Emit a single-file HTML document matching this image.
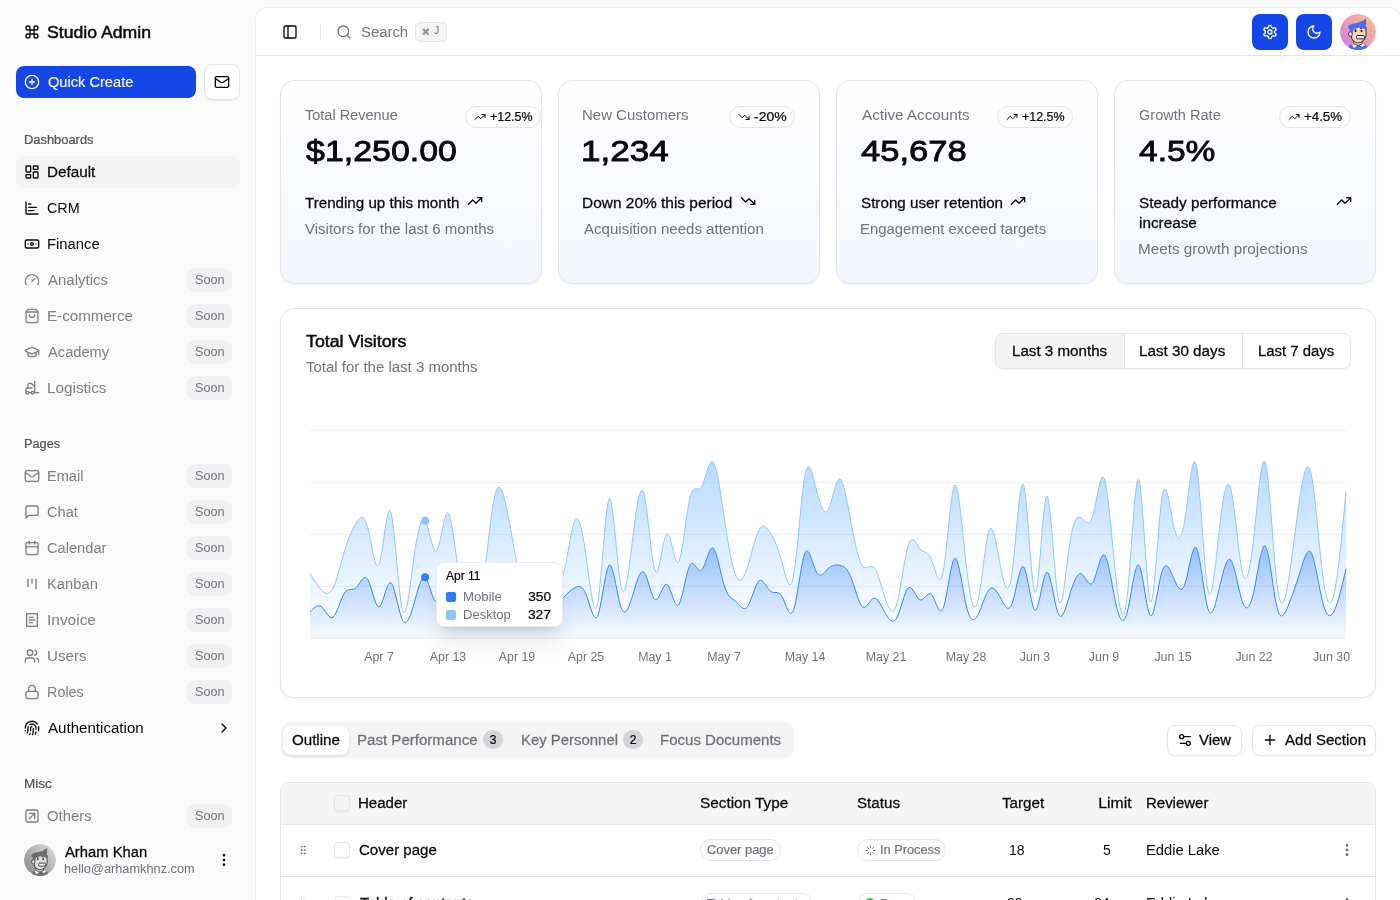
<!DOCTYPE html><html><head><meta charset="utf-8"><style>
*{box-sizing:border-box;margin:0;padding:0}
html,body{width:1400px;height:900px;overflow:hidden}
body{background:#fafafa;font-family:"Liberation Sans",sans-serif;color:#09090b;position:relative}
.a{position:absolute}
.t{position:absolute;line-height:1;white-space:nowrap;will-change:transform}
.ic{position:absolute;overflow:visible}
</style></head><body>
<svg class="ic" style="left:24px;top:24px;" width="16" height="16" viewBox="0 0 24 24" fill="none" stroke="#09090b" stroke-width="2" stroke-linecap="round" stroke-linejoin="round"><path d="M15 6v12a3 3 0 1 0 3-3H6a3 3 0 1 0 3 3V6a3 3 0 1 0-3 3h12a3 3 0 1 0-3-3"/></svg>
<div class="t" style="left:47.41px;top:24.76px;font-size:16px;font-weight:400;color:#09090b;-webkit-text-stroke:0.448px #09090b;transform:scaleX(1.1029);transform-origin:left;">Studio Admin</div>
<div class="a" style="left:16px;top:66px;width:180px;height:32px;background:#1447e6;border-radius:8px;"></div>
<svg class="ic" style="left:24px;top:74px;" width="16" height="16" viewBox="0 0 24 24" fill="none" stroke="#ffffff" stroke-width="2" stroke-linecap="round" stroke-linejoin="round"><circle cx="12" cy="12" r="10"/><path d="M8 12h8"/><path d="M12 8v8"/></svg>
<div class="t" style="left:47.74px;top:75.35px;font-size:14px;font-weight:400;color:#ffffff;-webkit-text-stroke:0.252px #ffffff;transform:scaleX(1.0444);transform-origin:left;-webkit-text-stroke:0.12px #fff;">Quick Create</div>
<div class="a" style="left:204px;top:64px;width:36px;height:36px;background:#fff;border:1px solid #e4e4e7;border-radius:8px;box-shadow:0 1px 2px rgba(0,0,0,.05);"></div>
<svg class="ic" style="left:214px;top:74px;" width="16" height="16" viewBox="0 0 24 24" fill="none" stroke="#09090b" stroke-width="2" stroke-linecap="round" stroke-linejoin="round"><rect width="20" height="16" x="2" y="4" rx="2"/><path d="m22 7-8.97 5.7a1.94 1.94 0 0 1-2.06 0L2 7"/></svg>
<div class="t" style="left:23.57px;top:133.74px;font-size:12px;font-weight:400;color:#525256;-webkit-text-stroke:0.216px #525256;transform:scaleX(1.0742);transform-origin:left;">Dashboards</div>
<div class="a" style="left:16px;top:156px;width:224px;height:32px;background:#f4f4f5;border-radius:8px;"></div>
<svg class="ic" style="left:24px;top:164px;" width="16" height="16" viewBox="0 0 24 24" fill="none" stroke="#09090b" stroke-width="2" stroke-linecap="round" stroke-linejoin="round"><rect width="7" height="9" x="3" y="3" rx="1"/><rect width="7" height="5" x="14" y="3" rx="1"/><rect width="7" height="9" x="14" y="12" rx="1"/><rect width="7" height="5" x="3" y="16" rx="1"/></svg>
<div class="t" style="left:46.68px;top:165.15px;font-size:14px;font-weight:400;color:#09090b;-webkit-text-stroke:0.252px #09090b;transform:scaleX(1.0900);transform-origin:left;">Default</div>
<svg class="ic" style="left:24px;top:200px;" width="16" height="16" viewBox="0 0 24 24" fill="none" stroke="#09090b" stroke-width="2" stroke-linecap="round" stroke-linejoin="round"><path d="M3 3v16a2 2 0 0 0 2 2h16"/><path d="M7 16h8"/><path d="M7 11h12"/><path d="M7 6h3"/></svg>
<div class="t" style="left:47.18px;top:201.15px;font-size:14px;font-weight:400;color:#09090b;transform:scaleX(1.0256);transform-origin:left;">CRM</div>
<svg class="ic" style="left:24px;top:236px;" width="16" height="16" viewBox="0 0 24 24" fill="none" stroke="#09090b" stroke-width="2" stroke-linecap="round" stroke-linejoin="round"><rect width="20" height="12" x="2" y="6" rx="2"/><circle cx="12" cy="12" r="2"/><path d="M6 12h.01M18 12h.01"/></svg>
<div class="t" style="left:46.71px;top:237.15px;font-size:14px;font-weight:400;color:#09090b;transform:scaleX(1.0600);transform-origin:left;">Finance</div>
<svg class="ic" style="left:24px;top:272px;" width="16" height="16" viewBox="0 0 24 24" fill="none" stroke="#7e7e80" stroke-width="2" stroke-linecap="round" stroke-linejoin="round"><path d="m12 14 4-4"/><path d="M3.34 19a10 10 0 1 1 17.32 0"/></svg>
<div class="t" style="left:47.90px;top:273.15px;font-size:14px;font-weight:400;color:#7e7e80;transform:scaleX(1.0701);transform-origin:left;">Analytics</div>
<div class="a" style="left:187.4px;top:268.25px;width:44.6px;height:23.5px;background:#f0f0f2;border-radius:8px;"></div>
<div class="t" style="left:194.63px;top:274.04px;font-size:12px;font-weight:400;color:#76767a;transform:scaleX(1.0562);transform-origin:left;">Soon</div>
<svg class="ic" style="left:24px;top:308px;" width="16" height="16" viewBox="0 0 24 24" fill="none" stroke="#7e7e80" stroke-width="2" stroke-linecap="round" stroke-linejoin="round"><path d="M16 10a4 4 0 0 1-8 0"/><path d="M3.103 6.034h17.794"/><path d="M3.4 5.467a2 2 0 0 0-.4 1.2V20a2 2 0 0 0 2 2h14a2 2 0 0 0 2-2V6.667a2 2 0 0 0-.4-1.2l-2-2.667A2 2 0 0 0 17 2H7a2 2 0 0 0-1.6.8z"/></svg>
<div class="t" style="left:46.69px;top:309.15px;font-size:14px;font-weight:400;color:#7e7e80;transform:scaleX(1.0830);transform-origin:left;">E-commerce</div>
<div class="a" style="left:187.4px;top:304.25px;width:44.6px;height:23.5px;background:#f0f0f2;border-radius:8px;"></div>
<div class="t" style="left:194.63px;top:310.04px;font-size:12px;font-weight:400;color:#76767a;transform:scaleX(1.0562);transform-origin:left;">Soon</div>
<svg class="ic" style="left:24px;top:344px;" width="16" height="16" viewBox="0 0 24 24" fill="none" stroke="#7e7e80" stroke-width="2" stroke-linecap="round" stroke-linejoin="round"><path d="M21.42 10.922a1 1 0 0 0-.019-1.838L12.83 5.18a2 2 0 0 0-1.66 0L2.6 9.08a1 1 0 0 0 0 1.832l8.57 3.908a2 2 0 0 0 1.66 0z"/><path d="M22 10v6"/><path d="M6 12.5V16a6 3 0 0 0 12 0v-3.5"/></svg>
<div class="t" style="left:47.90px;top:345.15px;font-size:14px;font-weight:400;color:#7e7e80;transform:scaleX(1.0483);transform-origin:left;">Academy</div>
<div class="a" style="left:187.4px;top:340.25px;width:44.6px;height:23.5px;background:#f0f0f2;border-radius:8px;"></div>
<div class="t" style="left:194.63px;top:346.04px;font-size:12px;font-weight:400;color:#76767a;transform:scaleX(1.0562);transform-origin:left;">Soon</div>
<svg class="ic" style="left:24px;top:380px;" width="16" height="16" viewBox="0 0 24 24" fill="none" stroke="#7e7e80" stroke-width="2" stroke-linecap="round" stroke-linejoin="round"><path d="M12 12H5a2 2 0 0 0-2 2v5"/><circle cx="13" cy="19" r="2"/><circle cx="5" cy="19" r="2"/><path d="M8 19h3m5-17v17h6M6 12V7c0-1.1.9-2 2-2h3l5 5"/></svg>
<div class="t" style="left:46.68px;top:381.15px;font-size:14px;font-weight:400;color:#7e7e80;transform:scaleX(1.0918);transform-origin:left;">Logistics</div>
<div class="a" style="left:187.4px;top:376.25px;width:44.6px;height:23.5px;background:#f0f0f2;border-radius:8px;"></div>
<div class="t" style="left:194.63px;top:382.04px;font-size:12px;font-weight:400;color:#76767a;transform:scaleX(1.0562);transform-origin:left;">Soon</div>
<div class="t" style="left:23.58px;top:437.74px;font-size:12px;font-weight:400;color:#525256;-webkit-text-stroke:0.216px #525256;transform:scaleX(1.0600);transform-origin:left;">Pages</div>
<svg class="ic" style="left:24px;top:468px;" width="16" height="16" viewBox="0 0 24 24" fill="none" stroke="#7e7e80" stroke-width="2" stroke-linecap="round" stroke-linejoin="round"><rect width="20" height="16" x="2" y="4" rx="2"/><path d="m22 7-8.97 5.7a1.94 1.94 0 0 1-2.06 0L2 7"/></svg>
<div class="t" style="left:46.73px;top:469.15px;font-size:14px;font-weight:400;color:#7e7e80;transform:scaleX(1.0403);transform-origin:left;">Email</div>
<div class="a" style="left:187.4px;top:464.25px;width:44.6px;height:23.5px;background:#f0f0f2;border-radius:8px;"></div>
<div class="t" style="left:194.63px;top:470.04px;font-size:12px;font-weight:400;color:#76767a;transform:scaleX(1.0562);transform-origin:left;">Soon</div>
<svg class="ic" style="left:24px;top:504px;" width="16" height="16" viewBox="0 0 24 24" fill="none" stroke="#7e7e80" stroke-width="2" stroke-linecap="round" stroke-linejoin="round"><path d="M21 15a2 2 0 0 1-2 2H7l-4 4V5a2 2 0 0 1 2-2h14a2 2 0 0 1 2 2z"/></svg>
<div class="t" style="left:47.17px;top:505.15px;font-size:14px;font-weight:400;color:#7e7e80;transform:scaleX(1.0428);transform-origin:left;">Chat</div>
<div class="a" style="left:187.4px;top:500.25px;width:44.6px;height:23.5px;background:#f0f0f2;border-radius:8px;"></div>
<div class="t" style="left:194.63px;top:506.04px;font-size:12px;font-weight:400;color:#76767a;transform:scaleX(1.0562);transform-origin:left;">Soon</div>
<svg class="ic" style="left:24px;top:540px;" width="16" height="16" viewBox="0 0 24 24" fill="none" stroke="#7e7e80" stroke-width="2" stroke-linecap="round" stroke-linejoin="round"><path d="M8 2v4"/><path d="M16 2v4"/><rect width="18" height="18" x="3" y="4" rx="2"/><path d="M3 10h18"/></svg>
<div class="t" style="left:47.17px;top:541.15px;font-size:14px;font-weight:400;color:#7e7e80;transform:scaleX(1.0455);transform-origin:left;">Calendar</div>
<div class="a" style="left:187.4px;top:536.25px;width:44.6px;height:23.5px;background:#f0f0f2;border-radius:8px;"></div>
<div class="t" style="left:194.63px;top:542.04px;font-size:12px;font-weight:400;color:#76767a;transform:scaleX(1.0562);transform-origin:left;">Soon</div>
<svg class="ic" style="left:24px;top:576px;" width="16" height="16" viewBox="0 0 24 24" fill="none" stroke="#7e7e80" stroke-width="2" stroke-linecap="round" stroke-linejoin="round"><path d="M6 5v11"/><path d="M12 5v6"/><path d="M18 5v14"/></svg>
<div class="t" style="left:46.72px;top:577.15px;font-size:14px;font-weight:400;color:#7e7e80;transform:scaleX(1.0541);transform-origin:left;">Kanban</div>
<div class="a" style="left:187.4px;top:572.25px;width:44.6px;height:23.5px;background:#f0f0f2;border-radius:8px;"></div>
<div class="t" style="left:194.63px;top:578.04px;font-size:12px;font-weight:400;color:#76767a;transform:scaleX(1.0562);transform-origin:left;">Soon</div>
<svg class="ic" style="left:24px;top:612px;" width="16" height="16" viewBox="0 0 24 24" fill="none" stroke="#7e7e80" stroke-width="2" stroke-linecap="round" stroke-linejoin="round"><path d="M4 2v20l2-1 2 1 2-1 2 1 2-1 2 1 2-1 2 1V2l-2 1-2-1-2 1-2-1-2 1-2-1-2 1Z"/><path d="M14 8H8"/><path d="M16 12H8"/><path d="M13 16H8"/></svg>
<div class="t" style="left:46.51px;top:613.15px;font-size:14px;font-weight:400;color:#7e7e80;transform:scaleX(1.1033);transform-origin:left;">Invoice</div>
<div class="a" style="left:187.4px;top:608.25px;width:44.6px;height:23.5px;background:#f0f0f2;border-radius:8px;"></div>
<div class="t" style="left:194.63px;top:614.04px;font-size:12px;font-weight:400;color:#76767a;transform:scaleX(1.0562);transform-origin:left;">Soon</div>
<svg class="ic" style="left:24px;top:648px;" width="16" height="16" viewBox="0 0 24 24" fill="none" stroke="#7e7e80" stroke-width="2" stroke-linecap="round" stroke-linejoin="round"><path d="M16 21v-2a4 4 0 0 0-4-4H6a4 4 0 0 0-4 4v2"/><circle cx="9" cy="7" r="4"/><path d="M22 21v-2a4 4 0 0 0-3-3.87"/><path d="M16 3.13a4 4 0 0 1 0 7.75"/></svg>
<div class="t" style="left:46.77px;top:649.15px;font-size:14px;font-weight:400;color:#7e7e80;transform:scaleX(1.0800);transform-origin:left;">Users</div>
<div class="a" style="left:187.4px;top:644.25px;width:44.6px;height:23.5px;background:#f0f0f2;border-radius:8px;"></div>
<div class="t" style="left:194.63px;top:650.04px;font-size:12px;font-weight:400;color:#76767a;transform:scaleX(1.0562);transform-origin:left;">Soon</div>
<svg class="ic" style="left:24px;top:684px;" width="16" height="16" viewBox="0 0 24 24" fill="none" stroke="#7e7e80" stroke-width="2" stroke-linecap="round" stroke-linejoin="round"><rect width="18" height="11" x="3" y="11" rx="2" ry="2"/><path d="M7 11V7a5 5 0 0 1 10 0v4"/></svg>
<div class="t" style="left:46.75px;top:685.15px;font-size:14px;font-weight:400;color:#7e7e80;transform:scaleX(1.0275);transform-origin:left;">Roles</div>
<div class="a" style="left:187.4px;top:680.25px;width:44.6px;height:23.5px;background:#f0f0f2;border-radius:8px;"></div>
<div class="t" style="left:194.63px;top:686.04px;font-size:12px;font-weight:400;color:#76767a;transform:scaleX(1.0562);transform-origin:left;">Soon</div>
<svg class="ic" style="left:24px;top:720px;" width="16" height="16" viewBox="0 0 24 24" fill="none" stroke="#09090b" stroke-width="2" stroke-linecap="round" stroke-linejoin="round"><path d="M12 10a2 2 0 0 0-2 2c0 1.02-.1 2.51-.26 4"/><path d="M14 13.12c0 2.38 0 6.38-1 8.88"/><path d="M17.29 21.02c.12-.6.43-2.3.5-3.02"/><path d="M2 12a10 10 0 0 1 18-6"/><path d="M2 16h.01"/><path d="M21.8 16c.2-2 .131-5.354 0-6"/><path d="M5 19.5C5.5 18 6 15 6 12a6 6 0 0 1 .34-2"/><path d="M8.65 22c.21-.66.45-1.32.57-2"/><path d="M9 6.8a6 6 0 0 1 9 5.2v2"/></svg>
<div class="t" style="left:47.90px;top:721.15px;font-size:14px;font-weight:400;color:#09090b;transform:scaleX(1.0788);transform-origin:left;">Authentication</div>
<svg class="ic" style="left:216px;top:720px;" width="16" height="16" viewBox="0 0 24 24" fill="none" stroke="#09090b" stroke-width="2" stroke-linecap="round" stroke-linejoin="round"><path d="m9 18 6-6-6-6"/></svg>
<div class="t" style="left:23.52px;top:777.74px;font-size:12px;font-weight:400;color:#525256;-webkit-text-stroke:0.216px #525256;transform:scaleX(1.1282);transform-origin:left;">Misc</div>
<svg class="ic" style="left:24px;top:808px;" width="16" height="16" viewBox="0 0 24 24" fill="none" stroke="#7e7e80" stroke-width="2" stroke-linecap="round" stroke-linejoin="round"><rect width="18" height="18" x="3" y="3" rx="2"/><path d="M8 8h8v8"/><path d="m8 16 8-8"/></svg>
<div class="t" style="left:47.23px;top:809.15px;font-size:14px;font-weight:400;color:#7e7e80;transform:scaleX(1.0616);transform-origin:left;">Others</div>
<div class="a" style="left:187.4px;top:804.25px;width:44.6px;height:23.5px;background:#f0f0f2;border-radius:8px;"></div>
<div class="t" style="left:194.63px;top:810.04px;font-size:12px;font-weight:400;color:#76767a;transform:scaleX(1.0562);transform-origin:left;">Soon</div>
<svg class="ic" style="left:24px;top:844px" width="32" height="32" viewBox="0 0 36 36">
<defs><linearGradient id="gav2" x1="0" y1="1" x2="1" y2="0"><stop offset="0.1" stop-color="#8a8a8a"/><stop offset="0.9" stop-color="#d8d8d8"/></linearGradient>
<clipPath id="cav2"><circle cx="18" cy="18" r="18"/></clipPath></defs>
<g clip-path="url(#cav2)"><circle cx="18" cy="18" r="18" fill="url(#gav2)"/>
<path d="M7 37 L9 32 Q13 29 17 30 Q22 29 26 31 L29 37Z" fill="#707070"/>
<path d="M12 31 L15 29 L17 32 L14 34Z M22 29 L25 31 L22 33 L20 31Z" fill="#f4f4f8"/>
<path d="M13 26 L14 30 Q18 33 22 30 L22 26Z" fill="#dcdcdc" stroke="#1a1a1a" stroke-width=".7"/>
<path d="M11 17 Q10 27 17 29 Q24 29 26 22 L26 13 Q19 11 12 15Z" fill="#dcdcdc" stroke="#1a1a1a" stroke-width=".8"/>
<ellipse cx="10.5" cy="20" rx="2" ry="2.4" fill="#dcdcdc" stroke="#1a1a1a" stroke-width=".7"/>
<path d="M8 12 Q12 9 17 9 Q22 8 26 4.5 Q26.5 9 25.5 12 L26 16 Q20 12 14 15 L12 20 Q10 18 9.5 15 Q8 14 8 12Z" fill="#6a6a6a"/>
<path d="M14.5 15 l2 1 M20 14.5 l2 .3" stroke="#1a1a1a" stroke-width=".8"/>
<circle cx="15.5" cy="17" r="1" fill="#1a1a1a"/><circle cx="21.5" cy="17" r="1" fill="#1a1a1a"/>
<rect x="16.5" y="21.5" width="8" height="3.3" rx="1.2" fill="#fff" stroke="#1a1a1a" stroke-width=".9"/>
</g></svg>
<div class="t" style="left:64.50px;top:845.05px;font-size:14px;font-weight:400;color:#09090b;-webkit-text-stroke:0.252px #09090b;transform:scaleX(1.0568);transform-origin:left;">Arham Khan</div>
<div class="t" style="left:63.61px;top:862.64px;font-size:12px;font-weight:400;color:#71717a;transform:scaleX(1.0633);transform-origin:left;">hello@arhamkhnz.com</div>
<svg class="ic" style="left:216px;top:852px;" width="16" height="16" viewBox="0 0 24 24" fill="none" stroke="#09090b" stroke-width="2" stroke-linecap="round" stroke-linejoin="round"><circle cx="12" cy="12" r="1"/><circle cx="12" cy="5" r="1"/><circle cx="12" cy="19" r="1"/></svg>
<div class="a" style="left:256px;top:8px;width:1144px;height:920px;background:#fff;border-radius:12px;box-shadow:0 0 0 1px #efeff1, 0 1px 2px rgba(0,0,0,.03);"></div>
<div class="a" style="left:256px;top:55px;width:1144px;height:1px;background:#e4e4e7;"></div>
<svg class="ic" style="left:282px;top:24px;" width="16" height="16" viewBox="0 0 24 24" fill="none" stroke="#09090b" stroke-width="2" stroke-linecap="round" stroke-linejoin="round"><rect width="18" height="18" x="3" y="3" rx="2"/><path d="M9 3v18"/></svg>
<div class="a" style="left:320px;top:24px;width:1px;height:16px;background:#e4e4e7;"></div>
<svg class="ic" style="left:336px;top:24px;" width="16" height="16" viewBox="0 0 24 24" fill="none" stroke="#71717a" stroke-width="2" stroke-linecap="round" stroke-linejoin="round"><circle cx="11" cy="11" r="8"/><path d="m21 21-4.3-4.3"/></svg>
<div class="t" style="left:360.93px;top:25.05px;font-size:14px;font-weight:400;color:#71717a;transform:scaleX(1.0615);transform-origin:left;">Search</div>
<div class="a" style="left:415px;top:22px;width:31.5px;height:19.5px;background:#f4f4f5;border:1px solid #e4e4e7;border-radius:5px;"></div>
<svg class="ic" style="left:422.4px;top:27.9px;" width="7.6" height="7.6" viewBox="0 0 24 24" fill="none" stroke="#71717a" stroke-width="2.7" stroke-linecap="round" stroke-linejoin="round"><path d="M15 6v12a3 3 0 1 0 3-3H6a3 3 0 1 0 3 3V6a3 3 0 1 0-3 3h12a3 3 0 1 0-3-3"/></svg>
<div class="t" style="left:433.84px;top:25.31px;font-size:10.5px;font-weight:400;color:#71717a;transform:scaleX(1.0000);transform-origin:left;font-family:"Liberation Mono",monospace;">J</div>
<div class="a" style="left:1252px;top:14px;width:36px;height:36px;background:#1447e6;border-radius:8px;"></div>
<svg class="ic" style="left:1262px;top:24px;" width="16" height="16" viewBox="0 0 24 24" fill="none" stroke="#fff" stroke-width="2" stroke-linecap="round" stroke-linejoin="round"><path d="M12.22 2h-.44a2 2 0 0 0-2 2v.18a2 2 0 0 1-1 1.73l-.43.25a2 2 0 0 1-2 0l-.15-.08a2 2 0 0 0-2.73.73l-.22.38a2 2 0 0 0 .73 2.73l.15.1a2 2 0 0 1 1 1.72v.51a2 2 0 0 1-1 1.74l-.15.09a2 2 0 0 0-.73 2.73l.22.38a2 2 0 0 0 2.73.73l.15-.08a2 2 0 0 1 2 0l.43.25a2 2 0 0 1 1 1.73V20a2 2 0 0 0 2 2h.44a2 2 0 0 0 2-2v-.18a2 2 0 0 1 1-1.73l.43-.25a2 2 0 0 1 2 0l.15.08a2 2 0 0 0 2.73-.73l.22-.39a2 2 0 0 0-.73-2.73l-.15-.08a2 2 0 0 1-1-1.74v-.5a2 2 0 0 1 1-1.74l.15-.09a2 2 0 0 0 .73-2.73l-.22-.38a2 2 0 0 0-2.73-.73l-.15.08a2 2 0 0 1-2 0l-.43-.25a2 2 0 0 1-1-1.73V4a2 2 0 0 0-2-2z"/><circle cx="12" cy="12" r="3"/></svg>
<div class="a" style="left:1296px;top:14px;width:36px;height:36px;background:#1447e6;border-radius:8px;"></div>
<svg class="ic" style="left:1306px;top:24px;" width="16" height="16" viewBox="0 0 24 24" fill="none" stroke="#fff" stroke-width="2" stroke-linecap="round" stroke-linejoin="round"><path d="M12 3a6 6 0 0 0 9 9 9 9 0 1 1-9-9Z"/></svg>
<svg class="ic" style="left:1340px;top:14px" width="36" height="36" viewBox="0 0 36 36">
<defs><linearGradient id="gav1" x1="0" y1="1" x2="1" y2="0"><stop offset="0.1" stop-color="#d77fe0"/><stop offset="0.9" stop-color="#f4bf8a"/></linearGradient>
<clipPath id="cav1"><circle cx="18" cy="18" r="18"/></clipPath></defs>
<g clip-path="url(#cav1)"><circle cx="18" cy="18" r="18" fill="url(#gav1)"/>
<path d="M7 37 L9 32 Q13 29 17 30 Q22 29 26 31 L29 37Z" fill="#4a6cf0"/>
<path d="M12 31 L15 29 L17 32 L14 34Z M22 29 L25 31 L22 33 L20 31Z" fill="#f4f4f8"/>
<path d="M13 26 L14 30 Q18 33 22 30 L22 26Z" fill="#fcd3bd" stroke="#111111" stroke-width=".7"/>
<path d="M11 17 Q10 27 17 29 Q24 29 26 22 L26 13 Q19 11 12 15Z" fill="#fcd3bd" stroke="#111111" stroke-width=".8"/>
<ellipse cx="10.5" cy="20" rx="2" ry="2.4" fill="#fcd3bd" stroke="#111111" stroke-width=".7"/>
<path d="M8 12 Q12 9 17 9 Q22 8 26 4.5 Q26.5 9 25.5 12 L26 16 Q20 12 14 15 L12 20 Q10 18 9.5 15 Q8 14 8 12Z" fill="#4a6cf0"/>
<path d="M14.5 15 l2 1 M20 14.5 l2 .3" stroke="#111111" stroke-width=".8"/>
<circle cx="15.5" cy="17" r="1" fill="#111111"/><circle cx="21.5" cy="17" r="1" fill="#111111"/>
<rect x="16.5" y="21.5" width="8" height="3.3" rx="1.2" fill="#fff" stroke="#111111" stroke-width=".9"/>
</g></svg>
<div class="a" style="left:280px;top:80px;width:262px;height:203.5px;background:linear-gradient(to top,#f3f6fe,#ffffff);border:1px solid #e4e4e7;border-radius:14px;box-shadow:0 1px 2px rgba(0,0,0,.05);"></div>
<div class="t" style="left:305.21px;top:108.15px;font-size:14px;font-weight:400;color:#71717a;transform:scaleX(1.0356);transform-origin:left;">Total Revenue</div>
<div class="t" style="left:305.66px;top:136.30px;font-size:30px;font-weight:400;color:#09090b;-webkit-text-stroke:0.840px #09090b;transform:scaleX(1.1313);transform-origin:left;">$1,250.00</div>
<div class="a" style="left:465px;top:106px;width:76px;height:21.5px;border:1px solid #e4e4e7;border-radius:999px;"></div>
<svg class="ic" style="left:474px;top:111px;" width="12" height="12" viewBox="0 0 24 24" fill="none" stroke="#09090b" stroke-width="2" stroke-linecap="round" stroke-linejoin="round"><polyline points="22 7 13.5 15.5 8.5 10.5 2 17"/><polyline points="16 7 22 7 22 13"/></svg>
<div class="t" style="left:490.38px;top:110.64px;font-size:12px;font-weight:400;color:#09090b;-webkit-text-stroke:0.216px #09090b;transform:scaleX(1.0370);transform-origin:left;">+12.5%</div>
<div class="t" style="left:305.20px;top:196.35px;font-size:14px;font-weight:400;color:#09090b;-webkit-text-stroke:0.252px #09090b;transform:scaleX(1.0815);transform-origin:left;">Trending up this month</div>
<svg class="ic" style="left:467px;top:193px;" width="16" height="16" viewBox="0 0 24 24" fill="none" stroke="#09090b" stroke-width="2" stroke-linecap="round" stroke-linejoin="round"><polyline points="22 7 13.5 15.5 8.5 10.5 2 17"/><polyline points="16 7 22 7 22 13"/></svg>
<div class="t" style="left:305.42px;top:222.15px;font-size:14px;font-weight:400;color:#71717a;transform:scaleX(1.0720);transform-origin:left;">Visitors for the last 6 months</div>
<div class="a" style="left:558px;top:80px;width:262px;height:203.5px;background:linear-gradient(to top,#f3f6fe,#ffffff);border:1px solid #e4e4e7;border-radius:14px;box-shadow:0 1px 2px rgba(0,0,0,.05);"></div>
<div class="t" style="left:582.30px;top:108.15px;font-size:14px;font-weight:400;color:#71717a;transform:scaleX(1.0694);transform-origin:left;">New Customers</div>
<div class="t" style="left:581.37px;top:136.30px;font-size:30px;font-weight:400;color:#09090b;-webkit-text-stroke:0.840px #09090b;transform:scaleX(1.1691);transform-origin:left;">1,234</div>
<div class="a" style="left:729px;top:106px;width:66px;height:21.5px;border:1px solid #e4e4e7;border-radius:999px;"></div>
<svg class="ic" style="left:738px;top:111px;" width="12" height="12" viewBox="0 0 24 24" fill="none" stroke="#09090b" stroke-width="2" stroke-linecap="round" stroke-linejoin="round"><polyline points="22 17 13.5 8.5 8.5 13.5 2 7"/><polyline points="16 17 22 17 22 11"/></svg>
<div class="t" style="left:754.37px;top:110.64px;font-size:12px;font-weight:400;color:#09090b;-webkit-text-stroke:0.216px #09090b;transform:scaleX(1.1641);transform-origin:left;">-20%</div>
<div class="t" style="left:582.26px;top:196.35px;font-size:14px;font-weight:400;color:#09090b;-webkit-text-stroke:0.252px #09090b;transform:scaleX(1.1035);transform-origin:left;">Down 20% this period</div>
<svg class="ic" style="left:740px;top:193px;" width="16" height="16" viewBox="0 0 24 24" fill="none" stroke="#09090b" stroke-width="2" stroke-linecap="round" stroke-linejoin="round"><polyline points="22 17 13.5 8.5 8.5 13.5 2 7"/><polyline points="16 17 22 17 22 11"/></svg>
<div class="t" style="left:583.50px;top:222.15px;font-size:14px;font-weight:400;color:#71717a;transform:scaleX(1.0746);transform-origin:left;">Acquisition needs attention</div>
<div class="a" style="left:836px;top:80px;width:262px;height:203.5px;background:linear-gradient(to top,#f3f6fe,#ffffff);border:1px solid #e4e4e7;border-radius:14px;box-shadow:0 1px 2px rgba(0,0,0,.05);"></div>
<div class="t" style="left:861.50px;top:108.15px;font-size:14px;font-weight:400;color:#71717a;transform:scaleX(1.0880);transform-origin:left;">Active Accounts</div>
<div class="t" style="left:861.31px;top:136.30px;font-size:30px;font-weight:400;color:#09090b;-webkit-text-stroke:0.840px #09090b;transform:scaleX(1.1533);transform-origin:left;">45,678</div>
<div class="a" style="left:997px;top:106px;width:76px;height:21.5px;border:1px solid #e4e4e7;border-radius:999px;"></div>
<svg class="ic" style="left:1006px;top:111px;" width="12" height="12" viewBox="0 0 24 24" fill="none" stroke="#09090b" stroke-width="2" stroke-linecap="round" stroke-linejoin="round"><polyline points="22 7 13.5 15.5 8.5 10.5 2 17"/><polyline points="16 7 22 7 22 13"/></svg>
<div class="t" style="left:1022.38px;top:110.64px;font-size:12px;font-weight:400;color:#09090b;-webkit-text-stroke:0.216px #09090b;transform:scaleX(1.0370);transform-origin:left;">+12.5%</div>
<div class="t" style="left:860.82px;top:196.35px;font-size:14px;font-weight:400;color:#09090b;-webkit-text-stroke:0.252px #09090b;transform:scaleX(1.0865);transform-origin:left;">Strong user retention</div>
<svg class="ic" style="left:1010px;top:193px;" width="16" height="16" viewBox="0 0 24 24" fill="none" stroke="#09090b" stroke-width="2" stroke-linecap="round" stroke-linejoin="round"><polyline points="22 7 13.5 15.5 8.5 10.5 2 17"/><polyline points="16 7 22 7 22 13"/></svg>
<div class="t" style="left:860.31px;top:222.15px;font-size:14px;font-weight:400;color:#71717a;transform:scaleX(1.0626);transform-origin:left;">Engagement exceed targets</div>
<div class="a" style="left:1114px;top:80px;width:262px;height:203.5px;background:linear-gradient(to top,#f3f6fe,#ffffff);border:1px solid #e4e4e7;border-radius:14px;box-shadow:0 1px 2px rgba(0,0,0,.05);"></div>
<div class="t" style="left:1138.77px;top:108.15px;font-size:14px;font-weight:400;color:#71717a;transform:scaleX(1.0400);transform-origin:left;">Growth Rate</div>
<div class="t" style="left:1139.33px;top:136.30px;font-size:30px;font-weight:400;color:#09090b;-webkit-text-stroke:0.840px #09090b;transform:scaleX(1.1176);transform-origin:left;">4.5%</div>
<div class="a" style="left:1279px;top:106px;width:72px;height:21.5px;border:1px solid #e4e4e7;border-radius:999px;"></div>
<svg class="ic" style="left:1288px;top:111px;" width="12" height="12" viewBox="0 0 24 24" fill="none" stroke="#09090b" stroke-width="2" stroke-linecap="round" stroke-linejoin="round"><polyline points="22 7 13.5 15.5 8.5 10.5 2 17"/><polyline points="16 7 22 7 22 13"/></svg>
<div class="t" style="left:1304.33px;top:110.64px;font-size:12px;font-weight:400;color:#09090b;-webkit-text-stroke:0.216px #09090b;transform:scaleX(1.1091);transform-origin:left;">+4.5%</div>
<div class="t" style="left:1138.81px;top:196.35px;font-size:14px;font-weight:400;color:#09090b;-webkit-text-stroke:0.252px #09090b;transform:scaleX(1.0929);transform-origin:left;">Steady performance</div>
<div class="t" style="left:1138.50px;top:216.35px;font-size:14px;font-weight:400;color:#09090b;-webkit-text-stroke:0.252px #09090b;transform:scaleX(1.0938);transform-origin:left;">increase</div>
<svg class="ic" style="left:1336px;top:193px;" width="16" height="16" viewBox="0 0 24 24" fill="none" stroke="#09090b" stroke-width="2" stroke-linecap="round" stroke-linejoin="round"><polyline points="22 7 13.5 15.5 8.5 10.5 2 17"/><polyline points="16 7 22 7 22 13"/></svg>
<div class="t" style="left:1138.28px;top:242.15px;font-size:14px;font-weight:400;color:#71717a;transform:scaleX(1.0896);transform-origin:left;">Meets growth projections</div>
<div class="a" style="left:280px;top:308px;width:1096px;height:389.5px;background:#fff;border:1px solid #e4e4e7;border-radius:14px;box-shadow:0 1px 2px rgba(0,0,0,.05);"></div>
<div class="t" style="left:305.64px;top:333.86px;font-size:16px;font-weight:400;color:#09090b;-webkit-text-stroke:0.448px #09090b;transform:scaleX(1.1104);transform-origin:left;">Total Visitors</div>
<div class="t" style="left:305.70px;top:360.15px;font-size:14px;font-weight:400;color:#71717a;transform:scaleX(1.0700);transform-origin:left;">Total for the last 3 months</div>
<div class="a" style="left:995px;top:333px;width:356px;height:35.6px;border:1px solid #e4e4e7;border-radius:8px;overflow:hidden;box-shadow:0 1px 2px rgba(0,0,0,.05);"></div>
<div class="a" style="left:996px;top:334px;width:127.6px;height:33.6px;background:#f4f4f5;border-radius:7px 0 0 7px;"></div>
<div class="a" style="left:1123.6px;top:334px;width:1px;height:33.6px;background:#e4e4e7;"></div>
<div class="a" style="left:1241.6px;top:334px;width:1px;height:33.6px;background:#e4e4e7;"></div>
<div class="t" style="left:1011.79px;top:343.65px;font-size:14px;font-weight:400;color:#09090b;-webkit-text-stroke:0.252px #09090b;transform:scaleX(1.0821);transform-origin:left;">Last 3 months</div>
<div class="t" style="left:1139.28px;top:343.65px;font-size:14px;font-weight:400;color:#09090b;-webkit-text-stroke:0.252px #09090b;transform:scaleX(1.0865);transform-origin:left;">Last 30 days</div>
<div class="t" style="left:1257.81px;top:343.65px;font-size:14px;font-weight:400;color:#09090b;-webkit-text-stroke:0.252px #09090b;transform:scaleX(1.0643);transform-origin:left;">Last 7 days</div>
<svg class="ic" style="left:0;top:0" width="1400" height="900" viewBox="0 0 1400 900">
<defs>
<linearGradient id="fD" gradientUnits="userSpaceOnUse" x1="0" y1="461.01" x2="0" y2="622.29"><stop offset="5%" stop-color="#8ec5ff" stop-opacity="1"/><stop offset="95%" stop-color="#8ec5ff" stop-opacity="0.1"/></linearGradient>
<linearGradient id="fM" gradientUnits="userSpaceOnUse" x1="0" y1="545.75" x2="0" y2="638"><stop offset="5%" stop-color="#2b7fff" stop-opacity="0.8"/><stop offset="95%" stop-color="#2b7fff" stop-opacity="0.1"/></linearGradient>
</defs>
<line x1="310" x2="1346" y1="430.5" y2="430.5" stroke="#f0f0f2" stroke-width="1"/><line x1="310" x2="1346" y1="482.5" y2="482.5" stroke="#f0f0f2" stroke-width="1"/><line x1="310" x2="1346" y1="534.5" y2="534.5" stroke="#f0f0f2" stroke-width="1"/><line x1="310" x2="1346" y1="586.5" y2="586.5" stroke="#f0f0f2" stroke-width="1"/><line x1="310" x2="1346" y1="638.5" y2="638.5" stroke="#f0f0f2" stroke-width="1"/>
<path d="M310.00,612.00C313.84,607.89,317.67,603.78,321.51,606.80C325.35,609.82,329.19,619.97,333.02,617.20C336.86,614.43,340.70,598.74,344.53,592.93C348.37,587.13,352.21,591.21,356.04,587.73C359.88,584.25,363.72,573.21,367.56,579.07C371.39,584.92,375.23,607.67,379.07,606.80C382.90,605.93,386.74,581.45,390.58,582.53C394.41,583.61,398.25,610.25,402.09,618.93C405.93,627.61,409.76,618.34,413.60,605.07C417.44,591.80,421.27,574.54,425.11,577.33C428.95,580.13,432.79,602.97,436.62,601.60C440.46,600.23,444.30,574.63,448.13,572.13C451.97,569.63,455.81,590.23,459.64,599.87C463.48,609.51,467.32,608.19,471.16,608.53C474.99,608.88,478.83,610.88,482.67,605.07C486.50,599.25,490.34,585.62,494.18,575.60C498.01,565.58,501.85,559.17,505.69,566.93C509.53,574.69,513.36,596.62,517.20,606.80C521.04,616.98,524.87,615.42,528.71,612.00C532.55,608.58,536.39,603.31,540.22,603.33C544.06,603.36,547.90,608.68,551.73,608.53C555.57,608.38,559.41,602.76,563.24,598.13C567.08,593.51,570.92,589.88,574.76,587.73C578.59,585.59,582.43,584.92,586.27,594.67C590.10,604.41,593.94,624.57,597.78,615.47C601.61,606.36,605.45,567.99,609.29,565.20C613.13,562.41,616.96,595.19,620.80,606.80C624.64,618.41,628.47,608.86,632.31,596.40C636.15,583.94,639.99,568.58,643.82,572.13C647.66,575.69,651.50,598.15,655.33,599.87C659.17,601.58,663.01,582.54,666.84,584.27C670.68,586.00,674.52,608.50,678.36,605.07C682.19,601.63,686.03,572.27,689.87,565.20C693.70,558.13,697.54,573.37,701.38,570.40C705.21,567.43,709.05,546.27,712.89,547.87C716.73,549.47,720.56,573.83,724.40,586.00C728.24,598.17,732.07,598.14,735.91,601.60C739.75,605.06,743.59,612.02,747.42,606.80C751.26,601.58,755.10,584.17,758.93,580.80C762.77,577.43,766.61,588.10,770.44,591.20C774.28,594.30,778.12,589.83,781.96,596.40C785.79,602.97,789.63,620.56,793.47,610.27C797.30,599.97,801.14,561.77,804.98,553.07C808.81,544.36,812.65,565.14,816.49,572.13C820.33,579.12,824.16,572.33,828.00,568.67C831.84,565.01,835.67,564.49,839.51,565.20C843.35,565.91,847.19,567.87,851.02,577.33C854.86,586.80,858.70,603.79,862.53,606.80C866.37,609.81,870.21,598.86,874.04,598.13C877.88,597.41,881.72,606.91,885.56,613.73C889.39,620.56,893.23,624.71,897.07,617.20C900.90,609.69,904.74,590.54,908.58,587.73C912.41,584.93,916.25,598.48,920.09,599.87C923.93,601.25,927.76,590.48,931.60,594.67C935.44,598.86,939.27,618.01,943.11,608.53C946.95,599.05,950.79,560.94,954.62,558.27C958.46,555.59,962.30,588.35,966.13,605.07C969.97,621.78,973.81,622.45,977.64,615.47C981.48,608.49,985.32,593.86,989.16,589.47C992.99,585.07,996.83,590.90,1000.67,598.13C1004.50,605.37,1008.34,614.00,1012.18,603.33C1016.01,592.66,1019.85,562.69,1023.69,566.93C1027.53,571.17,1031.36,609.63,1035.20,610.27C1039.04,610.90,1042.87,573.72,1046.71,572.13C1050.55,570.54,1054.39,604.54,1058.22,613.73C1062.06,622.93,1065.90,607.32,1069.73,594.67C1073.57,582.01,1077.41,572.30,1081.24,573.87C1085.08,575.43,1088.92,588.26,1092.76,582.53C1096.59,576.81,1100.43,552.52,1104.27,554.80C1108.10,557.08,1111.94,585.91,1115.78,603.33C1119.61,620.76,1123.45,626.78,1127.29,612.00C1131.13,597.22,1134.96,561.65,1138.80,565.20C1142.64,568.75,1146.47,611.42,1150.31,615.47C1154.15,619.51,1157.99,584.92,1161.82,572.13C1165.66,559.34,1169.50,568.35,1173.33,577.33C1177.17,586.32,1181.01,595.29,1184.84,584.27C1188.68,573.24,1192.52,542.21,1196.36,547.87C1200.19,553.52,1204.03,595.85,1207.87,608.53C1211.70,621.22,1215.54,604.25,1219.38,587.73C1223.21,571.22,1227.05,555.16,1230.89,560.00C1234.73,564.84,1238.56,590.59,1242.40,601.60C1246.24,612.61,1250.07,608.90,1253.91,591.20C1257.75,573.50,1261.59,541.82,1265.42,546.13C1269.26,550.45,1273.10,590.75,1276.93,606.80C1280.77,622.85,1284.61,614.64,1288.44,605.07C1292.28,595.49,1296.12,584.56,1299.96,572.13C1303.79,559.71,1307.63,545.79,1311.47,553.07C1315.30,560.35,1319.14,588.83,1322.98,603.33C1326.81,617.84,1330.65,618.37,1334.49,610.27C1338.33,602.16,1342.16,585.41,1346.00,568.67L1346.00,638.00L310.00,638.00Z" fill="url(#fM)" fill-opacity="0.6"/>
<path d="M310.00,612.00C313.84,607.89,317.67,603.78,321.51,606.80C325.35,609.82,329.19,619.97,333.02,617.20C336.86,614.43,340.70,598.74,344.53,592.93C348.37,587.13,352.21,591.21,356.04,587.73C359.88,584.25,363.72,573.21,367.56,579.07C371.39,584.92,375.23,607.67,379.07,606.80C382.90,605.93,386.74,581.45,390.58,582.53C394.41,583.61,398.25,610.25,402.09,618.93C405.93,627.61,409.76,618.34,413.60,605.07C417.44,591.80,421.27,574.54,425.11,577.33C428.95,580.13,432.79,602.97,436.62,601.60C440.46,600.23,444.30,574.63,448.13,572.13C451.97,569.63,455.81,590.23,459.64,599.87C463.48,609.51,467.32,608.19,471.16,608.53C474.99,608.88,478.83,610.88,482.67,605.07C486.50,599.25,490.34,585.62,494.18,575.60C498.01,565.58,501.85,559.17,505.69,566.93C509.53,574.69,513.36,596.62,517.20,606.80C521.04,616.98,524.87,615.42,528.71,612.00C532.55,608.58,536.39,603.31,540.22,603.33C544.06,603.36,547.90,608.68,551.73,608.53C555.57,608.38,559.41,602.76,563.24,598.13C567.08,593.51,570.92,589.88,574.76,587.73C578.59,585.59,582.43,584.92,586.27,594.67C590.10,604.41,593.94,624.57,597.78,615.47C601.61,606.36,605.45,567.99,609.29,565.20C613.13,562.41,616.96,595.19,620.80,606.80C624.64,618.41,628.47,608.86,632.31,596.40C636.15,583.94,639.99,568.58,643.82,572.13C647.66,575.69,651.50,598.15,655.33,599.87C659.17,601.58,663.01,582.54,666.84,584.27C670.68,586.00,674.52,608.50,678.36,605.07C682.19,601.63,686.03,572.27,689.87,565.20C693.70,558.13,697.54,573.37,701.38,570.40C705.21,567.43,709.05,546.27,712.89,547.87C716.73,549.47,720.56,573.83,724.40,586.00C728.24,598.17,732.07,598.14,735.91,601.60C739.75,605.06,743.59,612.02,747.42,606.80C751.26,601.58,755.10,584.17,758.93,580.80C762.77,577.43,766.61,588.10,770.44,591.20C774.28,594.30,778.12,589.83,781.96,596.40C785.79,602.97,789.63,620.56,793.47,610.27C797.30,599.97,801.14,561.77,804.98,553.07C808.81,544.36,812.65,565.14,816.49,572.13C820.33,579.12,824.16,572.33,828.00,568.67C831.84,565.01,835.67,564.49,839.51,565.20C843.35,565.91,847.19,567.87,851.02,577.33C854.86,586.80,858.70,603.79,862.53,606.80C866.37,609.81,870.21,598.86,874.04,598.13C877.88,597.41,881.72,606.91,885.56,613.73C889.39,620.56,893.23,624.71,897.07,617.20C900.90,609.69,904.74,590.54,908.58,587.73C912.41,584.93,916.25,598.48,920.09,599.87C923.93,601.25,927.76,590.48,931.60,594.67C935.44,598.86,939.27,618.01,943.11,608.53C946.95,599.05,950.79,560.94,954.62,558.27C958.46,555.59,962.30,588.35,966.13,605.07C969.97,621.78,973.81,622.45,977.64,615.47C981.48,608.49,985.32,593.86,989.16,589.47C992.99,585.07,996.83,590.90,1000.67,598.13C1004.50,605.37,1008.34,614.00,1012.18,603.33C1016.01,592.66,1019.85,562.69,1023.69,566.93C1027.53,571.17,1031.36,609.63,1035.20,610.27C1039.04,610.90,1042.87,573.72,1046.71,572.13C1050.55,570.54,1054.39,604.54,1058.22,613.73C1062.06,622.93,1065.90,607.32,1069.73,594.67C1073.57,582.01,1077.41,572.30,1081.24,573.87C1085.08,575.43,1088.92,588.26,1092.76,582.53C1096.59,576.81,1100.43,552.52,1104.27,554.80C1108.10,557.08,1111.94,585.91,1115.78,603.33C1119.61,620.76,1123.45,626.78,1127.29,612.00C1131.13,597.22,1134.96,561.65,1138.80,565.20C1142.64,568.75,1146.47,611.42,1150.31,615.47C1154.15,619.51,1157.99,584.92,1161.82,572.13C1165.66,559.34,1169.50,568.35,1173.33,577.33C1177.17,586.32,1181.01,595.29,1184.84,584.27C1188.68,573.24,1192.52,542.21,1196.36,547.87C1200.19,553.52,1204.03,595.85,1207.87,608.53C1211.70,621.22,1215.54,604.25,1219.38,587.73C1223.21,571.22,1227.05,555.16,1230.89,560.00C1234.73,564.84,1238.56,590.59,1242.40,601.60C1246.24,612.61,1250.07,608.90,1253.91,591.20C1257.75,573.50,1261.59,541.82,1265.42,546.13C1269.26,550.45,1273.10,590.75,1276.93,606.80C1280.77,622.85,1284.61,614.64,1288.44,605.07C1292.28,595.49,1296.12,584.56,1299.96,572.13C1303.79,559.71,1307.63,545.79,1311.47,553.07C1315.30,560.35,1319.14,588.83,1322.98,603.33C1326.81,617.84,1330.65,618.37,1334.49,610.27C1338.33,602.16,1342.16,585.41,1346.00,568.67" fill="none" stroke="#2b7fff" stroke-width="1"/>
<path d="M310.00,573.52C313.84,579.75,317.67,585.97,321.51,589.99C325.35,594.00,329.19,595.81,333.02,588.25C336.86,580.70,340.70,563.79,344.53,550.99C348.37,538.18,352.21,529.49,356.04,523.08C359.88,516.67,363.72,512.54,367.56,526.89C371.39,541.25,375.23,574.08,379.07,564.33C382.90,554.59,386.74,502.26,390.58,511.64C394.41,521.02,398.25,592.11,402.09,608.71C405.93,625.31,409.76,587.42,413.60,559.83C417.44,532.24,421.27,514.94,425.11,520.65C428.95,526.37,432.79,555.09,436.62,550.99C440.46,546.89,444.30,509.96,448.13,512.85C451.97,515.75,455.81,558.45,459.64,576.12C463.48,593.79,467.32,586.41,471.16,587.73C474.99,589.06,478.83,599.09,482.67,581.15C486.50,563.21,490.34,517.30,494.18,498.29C498.01,479.29,501.85,487.19,505.69,503.84C509.53,520.49,513.36,545.91,517.20,564.68C521.04,583.45,524.87,595.59,528.71,596.57C532.55,597.56,536.39,587.39,540.22,579.59C544.06,571.78,547.90,566.35,551.73,569.71C555.57,573.07,559.41,585.22,563.24,574.21C567.08,563.20,570.92,529.03,574.76,520.65C578.59,512.28,582.43,529.71,586.27,557.40C590.10,585.09,593.94,623.05,597.78,602.47C601.61,581.88,605.45,502.76,609.29,498.81C613.13,494.87,616.96,566.10,620.80,585.65C624.64,605.20,628.47,573.07,632.31,541.80C636.15,510.53,639.99,480.12,643.82,493.44C647.66,506.76,651.50,563.80,655.33,571.27C659.17,578.74,663.01,536.63,666.84,533.48C670.68,530.33,674.52,566.13,678.36,562.25C682.19,558.38,686.03,514.83,689.87,498.47C693.70,482.10,697.54,492.91,701.38,487.03C705.21,481.14,709.05,458.55,712.89,461.55C716.73,464.54,720.56,493.12,724.40,518.75C728.24,544.37,732.07,567.05,735.91,575.77C739.75,584.50,743.59,579.27,747.42,567.45C751.26,555.63,755.10,537.21,758.93,530.01C762.77,522.81,766.61,526.83,770.44,533.13C774.28,539.44,778.12,548.04,781.96,562.25C785.79,576.47,789.63,596.31,793.47,576.12C797.30,555.93,801.14,495.71,804.98,475.41C808.81,455.12,812.65,474.75,816.49,490.15C820.33,505.54,824.16,516.70,828.00,510.08C831.84,503.46,835.67,479.06,839.51,478.71C843.35,478.35,847.19,502.04,851.02,522.73C854.86,543.43,858.70,561.14,862.53,566.07C866.37,571.00,870.21,563.15,874.04,567.45C877.88,571.75,881.72,588.19,885.56,599.52C889.39,610.85,893.23,617.06,897.07,603.16C900.90,589.26,904.74,555.23,908.58,544.05C912.41,532.87,916.25,544.54,920.09,548.91C923.93,553.27,927.76,550.33,931.60,559.83C935.44,569.32,939.27,591.24,943.11,571.61C946.95,551.99,950.79,490.82,954.62,485.47C958.46,480.12,962.30,530.59,966.13,564.68C969.97,598.77,973.81,616.49,977.64,601.95C981.48,587.40,985.32,540.59,989.16,530.53C992.99,520.47,996.83,547.16,1000.67,567.28C1004.50,587.40,1008.34,600.96,1012.18,572.48C1016.01,544.00,1019.85,473.49,1023.69,485.47C1027.53,497.44,1031.36,591.91,1035.20,592.41C1039.04,592.91,1042.87,499.44,1046.71,496.04C1050.55,492.64,1054.39,579.31,1058.22,598.48C1062.06,617.65,1065.90,569.30,1069.73,543.71C1073.57,518.11,1077.41,515.27,1081.24,517.88C1085.08,520.49,1088.92,528.56,1092.76,515.80C1096.59,503.04,1100.43,469.44,1104.27,478.88C1108.10,488.32,1111.94,540.78,1115.78,576.47C1119.61,612.15,1123.45,631.06,1127.29,596.05C1131.13,561.04,1134.96,472.12,1138.80,479.92C1142.64,487.72,1146.47,592.26,1150.31,601.43C1154.15,610.59,1157.99,524.38,1161.82,498.29C1165.66,472.21,1169.50,506.24,1173.33,524.12C1177.17,542.00,1181.01,543.71,1184.84,519.96C1188.68,496.21,1192.52,446.99,1196.36,465.53C1200.19,484.08,1204.03,570.38,1207.87,589.99C1211.70,609.60,1215.54,562.52,1219.38,528.63C1223.21,494.74,1227.05,474.03,1230.89,489.28C1234.73,504.53,1238.56,555.72,1242.40,572.31C1246.24,588.89,1250.07,570.88,1253.91,536.25C1257.75,501.63,1261.59,450.40,1265.42,462.93C1269.26,475.47,1273.10,551.76,1276.93,583.92C1280.77,616.08,1284.61,604.11,1288.44,580.63C1292.28,557.14,1296.12,522.14,1299.96,496.91C1303.79,471.68,1307.63,456.22,1311.47,475.41C1315.30,494.60,1319.14,548.43,1322.98,577.51C1326.81,606.58,1330.65,610.90,1334.49,592.41C1338.33,573.93,1342.16,532.64,1346.00,491.36L1346.00,568.67C1342.16,585.41,1338.33,602.16,1334.49,610.27C1330.65,618.37,1326.81,617.84,1322.98,603.33C1319.14,588.83,1315.30,560.35,1311.47,553.07C1307.63,545.79,1303.79,559.71,1299.96,572.13C1296.12,584.56,1292.28,595.49,1288.44,605.07C1284.61,614.64,1280.77,622.85,1276.93,606.80C1273.10,590.75,1269.26,550.45,1265.42,546.13C1261.59,541.82,1257.75,573.50,1253.91,591.20C1250.07,608.90,1246.24,612.61,1242.40,601.60C1238.56,590.59,1234.73,564.84,1230.89,560.00C1227.05,555.16,1223.21,571.22,1219.38,587.73C1215.54,604.25,1211.70,621.22,1207.87,608.53C1204.03,595.85,1200.19,553.52,1196.36,547.87C1192.52,542.21,1188.68,573.24,1184.84,584.27C1181.01,595.29,1177.17,586.32,1173.33,577.33C1169.50,568.35,1165.66,559.34,1161.82,572.13C1157.99,584.92,1154.15,619.51,1150.31,615.47C1146.47,611.42,1142.64,568.75,1138.80,565.20C1134.96,561.65,1131.13,597.22,1127.29,612.00C1123.45,626.78,1119.61,620.76,1115.78,603.33C1111.94,585.91,1108.10,557.08,1104.27,554.80C1100.43,552.52,1096.59,576.81,1092.76,582.53C1088.92,588.26,1085.08,575.43,1081.24,573.87C1077.41,572.30,1073.57,582.01,1069.73,594.67C1065.90,607.32,1062.06,622.93,1058.22,613.73C1054.39,604.54,1050.55,570.54,1046.71,572.13C1042.87,573.72,1039.04,610.90,1035.20,610.27C1031.36,609.63,1027.53,571.17,1023.69,566.93C1019.85,562.69,1016.01,592.66,1012.18,603.33C1008.34,614.00,1004.50,605.37,1000.67,598.13C996.83,590.90,992.99,585.07,989.16,589.47C985.32,593.86,981.48,608.49,977.64,615.47C973.81,622.45,969.97,621.78,966.13,605.07C962.30,588.35,958.46,555.59,954.62,558.27C950.79,560.94,946.95,599.05,943.11,608.53C939.27,618.01,935.44,598.86,931.60,594.67C927.76,590.48,923.93,601.25,920.09,599.87C916.25,598.48,912.41,584.93,908.58,587.73C904.74,590.54,900.90,609.69,897.07,617.20C893.23,624.71,889.39,620.56,885.56,613.73C881.72,606.91,877.88,597.41,874.04,598.13C870.21,598.86,866.37,609.81,862.53,606.80C858.70,603.79,854.86,586.80,851.02,577.33C847.19,567.87,843.35,565.91,839.51,565.20C835.67,564.49,831.84,565.01,828.00,568.67C824.16,572.33,820.33,579.12,816.49,572.13C812.65,565.14,808.81,544.36,804.98,553.07C801.14,561.77,797.30,599.97,793.47,610.27C789.63,620.56,785.79,602.97,781.96,596.40C778.12,589.83,774.28,594.30,770.44,591.20C766.61,588.10,762.77,577.43,758.93,580.80C755.10,584.17,751.26,601.58,747.42,606.80C743.59,612.02,739.75,605.06,735.91,601.60C732.07,598.14,728.24,598.17,724.40,586.00C720.56,573.83,716.73,549.47,712.89,547.87C709.05,546.27,705.21,567.43,701.38,570.40C697.54,573.37,693.70,558.13,689.87,565.20C686.03,572.27,682.19,601.63,678.36,605.07C674.52,608.50,670.68,586.00,666.84,584.27C663.01,582.54,659.17,601.58,655.33,599.87C651.50,598.15,647.66,575.69,643.82,572.13C639.99,568.58,636.15,583.94,632.31,596.40C628.47,608.86,624.64,618.41,620.80,606.80C616.96,595.19,613.13,562.41,609.29,565.20C605.45,567.99,601.61,606.36,597.78,615.47C593.94,624.57,590.10,604.41,586.27,594.67C582.43,584.92,578.59,585.59,574.76,587.73C570.92,589.88,567.08,593.51,563.24,598.13C559.41,602.76,555.57,608.38,551.73,608.53C547.90,608.68,544.06,603.36,540.22,603.33C536.39,603.31,532.55,608.58,528.71,612.00C524.87,615.42,521.04,616.98,517.20,606.80C513.36,596.62,509.53,574.69,505.69,566.93C501.85,559.17,498.01,565.58,494.18,575.60C490.34,585.62,486.50,599.25,482.67,605.07C478.83,610.88,474.99,608.88,471.16,608.53C467.32,608.19,463.48,609.51,459.64,599.87C455.81,590.23,451.97,569.63,448.13,572.13C444.30,574.63,440.46,600.23,436.62,601.60C432.79,602.97,428.95,580.13,425.11,577.33C421.27,574.54,417.44,591.80,413.60,605.07C409.76,618.34,405.93,627.61,402.09,618.93C398.25,610.25,394.41,583.61,390.58,582.53C386.74,581.45,382.90,605.93,379.07,606.80C375.23,607.67,371.39,584.92,367.56,579.07C363.72,573.21,359.88,584.25,356.04,587.73C352.21,591.21,348.37,587.13,344.53,592.93C340.70,598.74,336.86,614.43,333.02,617.20C329.19,619.97,325.35,609.82,321.51,606.80C317.67,603.78,313.84,607.89,310.00,612.00Z" fill="url(#fD)" fill-opacity="0.6"/>
<path d="M310.00,573.52C313.84,579.75,317.67,585.97,321.51,589.99C325.35,594.00,329.19,595.81,333.02,588.25C336.86,580.70,340.70,563.79,344.53,550.99C348.37,538.18,352.21,529.49,356.04,523.08C359.88,516.67,363.72,512.54,367.56,526.89C371.39,541.25,375.23,574.08,379.07,564.33C382.90,554.59,386.74,502.26,390.58,511.64C394.41,521.02,398.25,592.11,402.09,608.71C405.93,625.31,409.76,587.42,413.60,559.83C417.44,532.24,421.27,514.94,425.11,520.65C428.95,526.37,432.79,555.09,436.62,550.99C440.46,546.89,444.30,509.96,448.13,512.85C451.97,515.75,455.81,558.45,459.64,576.12C463.48,593.79,467.32,586.41,471.16,587.73C474.99,589.06,478.83,599.09,482.67,581.15C486.50,563.21,490.34,517.30,494.18,498.29C498.01,479.29,501.85,487.19,505.69,503.84C509.53,520.49,513.36,545.91,517.20,564.68C521.04,583.45,524.87,595.59,528.71,596.57C532.55,597.56,536.39,587.39,540.22,579.59C544.06,571.78,547.90,566.35,551.73,569.71C555.57,573.07,559.41,585.22,563.24,574.21C567.08,563.20,570.92,529.03,574.76,520.65C578.59,512.28,582.43,529.71,586.27,557.40C590.10,585.09,593.94,623.05,597.78,602.47C601.61,581.88,605.45,502.76,609.29,498.81C613.13,494.87,616.96,566.10,620.80,585.65C624.64,605.20,628.47,573.07,632.31,541.80C636.15,510.53,639.99,480.12,643.82,493.44C647.66,506.76,651.50,563.80,655.33,571.27C659.17,578.74,663.01,536.63,666.84,533.48C670.68,530.33,674.52,566.13,678.36,562.25C682.19,558.38,686.03,514.83,689.87,498.47C693.70,482.10,697.54,492.91,701.38,487.03C705.21,481.14,709.05,458.55,712.89,461.55C716.73,464.54,720.56,493.12,724.40,518.75C728.24,544.37,732.07,567.05,735.91,575.77C739.75,584.50,743.59,579.27,747.42,567.45C751.26,555.63,755.10,537.21,758.93,530.01C762.77,522.81,766.61,526.83,770.44,533.13C774.28,539.44,778.12,548.04,781.96,562.25C785.79,576.47,789.63,596.31,793.47,576.12C797.30,555.93,801.14,495.71,804.98,475.41C808.81,455.12,812.65,474.75,816.49,490.15C820.33,505.54,824.16,516.70,828.00,510.08C831.84,503.46,835.67,479.06,839.51,478.71C843.35,478.35,847.19,502.04,851.02,522.73C854.86,543.43,858.70,561.14,862.53,566.07C866.37,571.00,870.21,563.15,874.04,567.45C877.88,571.75,881.72,588.19,885.56,599.52C889.39,610.85,893.23,617.06,897.07,603.16C900.90,589.26,904.74,555.23,908.58,544.05C912.41,532.87,916.25,544.54,920.09,548.91C923.93,553.27,927.76,550.33,931.60,559.83C935.44,569.32,939.27,591.24,943.11,571.61C946.95,551.99,950.79,490.82,954.62,485.47C958.46,480.12,962.30,530.59,966.13,564.68C969.97,598.77,973.81,616.49,977.64,601.95C981.48,587.40,985.32,540.59,989.16,530.53C992.99,520.47,996.83,547.16,1000.67,567.28C1004.50,587.40,1008.34,600.96,1012.18,572.48C1016.01,544.00,1019.85,473.49,1023.69,485.47C1027.53,497.44,1031.36,591.91,1035.20,592.41C1039.04,592.91,1042.87,499.44,1046.71,496.04C1050.55,492.64,1054.39,579.31,1058.22,598.48C1062.06,617.65,1065.90,569.30,1069.73,543.71C1073.57,518.11,1077.41,515.27,1081.24,517.88C1085.08,520.49,1088.92,528.56,1092.76,515.80C1096.59,503.04,1100.43,469.44,1104.27,478.88C1108.10,488.32,1111.94,540.78,1115.78,576.47C1119.61,612.15,1123.45,631.06,1127.29,596.05C1131.13,561.04,1134.96,472.12,1138.80,479.92C1142.64,487.72,1146.47,592.26,1150.31,601.43C1154.15,610.59,1157.99,524.38,1161.82,498.29C1165.66,472.21,1169.50,506.24,1173.33,524.12C1177.17,542.00,1181.01,543.71,1184.84,519.96C1188.68,496.21,1192.52,446.99,1196.36,465.53C1200.19,484.08,1204.03,570.38,1207.87,589.99C1211.70,609.60,1215.54,562.52,1219.38,528.63C1223.21,494.74,1227.05,474.03,1230.89,489.28C1234.73,504.53,1238.56,555.72,1242.40,572.31C1246.24,588.89,1250.07,570.88,1253.91,536.25C1257.75,501.63,1261.59,450.40,1265.42,462.93C1269.26,475.47,1273.10,551.76,1276.93,583.92C1280.77,616.08,1284.61,604.11,1288.44,580.63C1292.28,557.14,1296.12,522.14,1299.96,496.91C1303.79,471.68,1307.63,456.22,1311.47,475.41C1315.30,494.60,1319.14,548.43,1322.98,577.51C1326.81,606.58,1330.65,610.90,1334.49,592.41C1338.33,573.93,1342.16,532.64,1346.00,491.36" fill="none" stroke="#8ec5ff" stroke-width="1"/>
<circle cx="425.11" cy="577.33" r="4" fill="#2b7fff"/>
<circle cx="425.11" cy="520.65" r="4" fill="#8ec5ff"/>
</svg>
<div class="t" style="left:179.10000000000002px;width:400px;text-align:center;top:650.54px;font-size:12px;font-weight:400;color:#71717a;transform:scaleX(1.0300);transform-origin:center;">Apr 7</div>
<div class="t" style="left:248.10000000000002px;width:400px;text-align:center;top:650.54px;font-size:12px;font-weight:400;color:#71717a;transform:scaleX(1.0300);transform-origin:center;">Apr 13</div>
<div class="t" style="left:317.20000000000005px;width:400px;text-align:center;top:650.54px;font-size:12px;font-weight:400;color:#71717a;transform:scaleX(1.0300);transform-origin:center;">Apr 19</div>
<div class="t" style="left:386.29999999999995px;width:400px;text-align:center;top:650.54px;font-size:12px;font-weight:400;color:#71717a;transform:scaleX(1.0300);transform-origin:center;">Apr 25</div>
<div class="t" style="left:455.29999999999995px;width:400px;text-align:center;top:650.54px;font-size:12px;font-weight:400;color:#71717a;transform:scaleX(1.0300);transform-origin:center;">May 1</div>
<div class="t" style="left:524.4px;width:400px;text-align:center;top:650.54px;font-size:12px;font-weight:400;color:#71717a;transform:scaleX(1.0300);transform-origin:center;">May 7</div>
<div class="t" style="left:605.0px;width:400px;text-align:center;top:650.54px;font-size:12px;font-weight:400;color:#71717a;transform:scaleX(1.0300);transform-origin:center;">May 14</div>
<div class="t" style="left:685.6px;width:400px;text-align:center;top:650.54px;font-size:12px;font-weight:400;color:#71717a;transform:scaleX(1.0300);transform-origin:center;">May 21</div>
<div class="t" style="left:766.1px;width:400px;text-align:center;top:650.54px;font-size:12px;font-weight:400;color:#71717a;transform:scaleX(1.0300);transform-origin:center;">May 28</div>
<div class="t" style="left:835.2px;width:400px;text-align:center;top:650.54px;font-size:12px;font-weight:400;color:#71717a;transform:scaleX(1.0300);transform-origin:center;">Jun 3</div>
<div class="t" style="left:904.3px;width:400px;text-align:center;top:650.54px;font-size:12px;font-weight:400;color:#71717a;transform:scaleX(1.0300);transform-origin:center;">Jun 9</div>
<div class="t" style="left:973.3px;width:400px;text-align:center;top:650.54px;font-size:12px;font-weight:400;color:#71717a;transform:scaleX(1.0300);transform-origin:center;">Jun 15</div>
<div class="t" style="left:1053.9px;width:400px;text-align:center;top:650.54px;font-size:12px;font-weight:400;color:#71717a;transform:scaleX(1.0300);transform-origin:center;">Jun 22</div>
<div class="t" style="right:49.5px;top:650.54px;font-size:12px;font-weight:400;color:#71717a;transform:scaleX(1.0300);transform-origin:right;">Jun 30</div>
<div class="a" style="left:436px;top:562px;width:126.5px;height:64.5px;background:#fff;border:1px solid #ececee;border-radius:8px;box-shadow:0 20px 25px -5px rgba(0,0,0,.1),0 8px 10px -6px rgba(0,0,0,.1);"></div>
<div class="t" style="left:446.00px;top:570.44px;font-size:12px;font-weight:400;color:#09090b;-webkit-text-stroke:0.216px #09090b;transform:scaleX(1.0000);transform-origin:left;">Apr 11</div>
<div class="a" style="left:446px;top:591.5px;width:10px;height:10px;background:#2b7fff;border-radius:2px;"></div>
<div class="t" style="left:463.44px;top:590.54px;font-size:12px;font-weight:400;color:#71717a;transform:scaleX(1.0993);transform-origin:left;">Mobile</div>
<div class="t" style="right:848.6px;top:590.54px;font-size:12px;font-weight:400;color:#09090b;-webkit-text-stroke:0.216px #09090b;transform:scaleX(1.1426);transform-origin:right;">350</div>
<div class="a" style="left:446px;top:609.5px;width:10px;height:10px;background:#8ec5ff;border-radius:2px;"></div>
<div class="t" style="left:463.46px;top:608.54px;font-size:12px;font-weight:400;color:#71717a;transform:scaleX(1.0860);transform-origin:left;">Desktop</div>
<div class="t" style="right:848.6px;top:608.54px;font-size:12px;font-weight:400;color:#09090b;-webkit-text-stroke:0.216px #09090b;transform:scaleX(1.1534);transform-origin:right;">327</div>
<div class="a" style="left:281px;top:722px;width:512.5px;height:36px;background:#f4f4f5;border-radius:10px;"></div>
<div class="a" style="left:283px;top:726px;width:66px;height:29px;background:#fff;border-radius:8px;box-shadow:0 1px 3px rgba(0,0,0,.1),0 1px 2px -1px rgba(0,0,0,.1);"></div>
<div class="t" style="left:292.02px;top:733.05px;font-size:14px;font-weight:400;color:#09090b;-webkit-text-stroke:0.252px #09090b;transform:scaleX(1.0801);transform-origin:left;">Outline</div>
<div class="t" style="left:357.09px;top:733.05px;font-size:14px;font-weight:400;color:#71717a;-webkit-text-stroke:0.252px #71717a;transform:scaleX(1.0760);transform-origin:left;">Past Performance</div>
<div class="a" style="left:483.3px;top:730px;width:19.7px;height:19.3px;background:#d4d4d8;border-radius:999px;"></div>
<div class="t" style="left:293.2px;width:400px;text-align:center;top:733.84px;font-size:12px;font-weight:400;color:#09090b;-webkit-text-stroke:0.216px #09090b;transform:scaleX(1.0000);transform-origin:center;">3</div>
<div class="t" style="left:520.71px;top:733.05px;font-size:14px;font-weight:400;color:#71717a;-webkit-text-stroke:0.252px #71717a;transform:scaleX(1.0655);transform-origin:left;">Key Personnel</div>
<div class="a" style="left:623.2px;top:730px;width:19.5px;height:19.3px;background:#d4d4d8;border-radius:999px;"></div>
<div class="t" style="left:433px;width:400px;text-align:center;top:733.84px;font-size:12px;font-weight:400;color:#09090b;-webkit-text-stroke:0.216px #09090b;transform:scaleX(1.0000);transform-origin:center;">2</div>
<div class="t" style="left:660.40px;top:733.05px;font-size:14px;font-weight:400;color:#71717a;-webkit-text-stroke:0.252px #71717a;transform:scaleX(1.0735);transform-origin:left;">Focus Documents</div>
<div class="a" style="left:1166.5px;top:724.5px;width:75.5px;height:31px;background:#fff;border:1px solid #e4e4e7;border-radius:8px;box-shadow:0 1px 2px rgba(0,0,0,.05);"></div>
<svg class="ic" style="left:1177px;top:732px;" width="16" height="16" viewBox="0 0 24 24" fill="none" stroke="#09090b" stroke-width="2" stroke-linecap="round" stroke-linejoin="round"><path d="M20 7h-9"/><path d="M14 17H5"/><circle cx="17" cy="17" r="3"/><circle cx="7" cy="7" r="3"/></svg>
<div class="t" style="left:1198.93px;top:732.75px;font-size:14px;font-weight:400;color:#09090b;-webkit-text-stroke:0.252px #09090b;transform:scaleX(1.0656);transform-origin:left;">View</div>
<div class="a" style="left:1251.5px;top:724.5px;width:124px;height:31px;background:#fff;border:1px solid #e4e4e7;border-radius:8px;box-shadow:0 1px 2px rgba(0,0,0,.05);"></div>
<svg class="ic" style="left:1262px;top:732px;" width="16" height="16" viewBox="0 0 24 24" fill="none" stroke="#09090b" stroke-width="2" stroke-linecap="round" stroke-linejoin="round"><path d="M5 12h14"/><path d="M12 5v14"/></svg>
<div class="t" style="left:1284.50px;top:732.75px;font-size:14px;font-weight:400;color:#09090b;-webkit-text-stroke:0.252px #09090b;transform:scaleX(1.0731);transform-origin:left;">Add Section</div>
<div class="a" style="left:280px;top:782px;width:1096px;height:140px;border:1px solid #e4e4e7;border-radius:9px;overflow:hidden;"></div>
<div class="a" style="left:281px;top:783px;width:1094px;height:40.5px;background:#f4f4f5;border-radius:8px 8px 0 0;"></div>
<div class="a" style="left:281px;top:823.5px;width:1094px;height:1px;background:#e4e4e7;"></div>
<div class="a" style="left:281px;top:876px;width:1094px;height:1px;background:#e4e4e7;"></div>
<div class="a" style="left:334px;top:795px;width:16px;height:16px;border:1px solid #e4e4e7;border-radius:4px;box-shadow:0 1px 2px rgba(0,0,0,.05);"></div>
<div class="t" style="left:358.40px;top:796.15px;font-size:14px;font-weight:400;color:#09090b;-webkit-text-stroke:0.252px #09090b;transform:scaleX(1.0750);transform-origin:left;">Header</div>
<div class="t" style="left:699.91px;top:796.15px;font-size:14px;font-weight:400;color:#09090b;-webkit-text-stroke:0.252px #09090b;transform:scaleX(1.0935);transform-origin:left;">Section Type</div>
<div class="t" style="left:857.12px;top:796.15px;font-size:14px;font-weight:400;color:#09090b;-webkit-text-stroke:0.252px #09090b;transform:scaleX(1.0837);transform-origin:left;">Status</div>
<div class="t" style="left:1001.70px;top:796.15px;font-size:14px;font-weight:400;color:#09090b;-webkit-text-stroke:0.252px #09090b;transform:scaleX(1.0857);transform-origin:left;">Target</div>
<div class="t" style="right:268.5999999999999px;top:796.15px;font-size:14px;font-weight:400;color:#09090b;-webkit-text-stroke:0.252px #09090b;transform:scaleX(1.1252);transform-origin:right;">Limit</div>
<div class="t" style="left:1146.30px;top:796.15px;font-size:14px;font-weight:400;color:#09090b;-webkit-text-stroke:0.252px #09090b;transform:scaleX(1.0688);transform-origin:left;">Reviewer</div>
<svg class="ic" style="left:297px;top:844px;" width="12" height="12" viewBox="0 0 24 24" fill="none" stroke="#71717a" stroke-width="2" stroke-linecap="round" stroke-linejoin="round"><circle cx="9" cy="12" r="1"/><circle cx="9" cy="5" r="1"/><circle cx="9" cy="19" r="1"/><circle cx="15" cy="12" r="1"/><circle cx="15" cy="5" r="1"/><circle cx="15" cy="19" r="1"/></svg>
<div class="a" style="left:334px;top:842px;width:16px;height:16px;border:1px solid #e4e4e7;border-radius:4px;box-shadow:0 1px 2px rgba(0,0,0,.05);"></div>
<div class="t" style="left:359.25px;top:842.75px;font-size:14px;font-weight:400;color:#09090b;-webkit-text-stroke:0.252px #09090b;transform:scaleX(1.0750);transform-origin:left;">Cover page</div>
<div class="a" style="left:700.2px;top:839px;width:80.4px;height:21.5px;border:1px solid #e4e4e7;border-radius:999px;"></div>
<div class="t" style="left:707.06px;top:844.14px;font-size:12px;font-weight:400;color:#71717a;-webkit-text-stroke:0.216px #71717a;transform:scaleX(1.0750);transform-origin:left;">Cover page</div>
<div class="a" style="left:857.4px;top:839px;width:89px;height:21.5px;border:1px solid #e4e4e7;border-radius:999px;"></div>
<svg class="ic" style="left:864.5px;top:844.5px;" width="11" height="11" viewBox="0 0 24 24" fill="none" stroke="#71717a" stroke-width="2" stroke-linecap="round" stroke-linejoin="round"><path d="M12 2v4"/><path d="m16.2 7.8 2.9-2.9"/><path d="M18 12h4"/><path d="m16.2 16.2 2.9 2.9"/><path d="M12 18v4"/><path d="m4.9 19.1 2.9-2.9"/><path d="M2 12h4"/><path d="m4.9 4.9 2.9 2.9"/></svg>
<div class="t" style="left:879.85px;top:844.14px;font-size:12px;font-weight:400;color:#71717a;-webkit-text-stroke:0.216px #71717a;transform:scaleX(1.0652);transform-origin:left;">In Process</div>
<div class="t" style="left:1008.75px;top:842.75px;font-size:14px;font-weight:400;color:#09090b;transform:scaleX(1.0000);transform-origin:left;">18</div>
<div class="t" style="left:1102.94px;top:842.75px;font-size:14px;font-weight:400;color:#09090b;transform:scaleX(1.0000);transform-origin:left;">5</div>
<div class="t" style="left:1146.32px;top:842.75px;font-size:14px;font-weight:400;color:#09090b;transform:scaleX(1.0539);transform-origin:left;">Eddie Lake</div>
<svg class="ic" style="left:1339px;top:842px;" width="16" height="16" viewBox="0 0 24 24" fill="none" stroke="#66666d" stroke-width="2" stroke-linecap="round" stroke-linejoin="round"><circle cx="12" cy="12" r="1"/><circle cx="12" cy="5" r="1"/><circle cx="12" cy="19" r="1"/></svg>
<svg class="ic" style="left:297px;top:897.7px;" width="12" height="12" viewBox="0 0 24 24" fill="none" stroke="#71717a" stroke-width="2" stroke-linecap="round" stroke-linejoin="round"><circle cx="9" cy="12" r="1"/><circle cx="9" cy="5" r="1"/><circle cx="9" cy="19" r="1"/><circle cx="15" cy="12" r="1"/><circle cx="15" cy="5" r="1"/><circle cx="15" cy="19" r="1"/></svg>
<div class="a" style="left:334px;top:895.7px;width:16px;height:16px;border:1px solid #e4e4e7;border-radius:4px;box-shadow:0 1px 2px rgba(0,0,0,.05);"></div>
<div class="t" style="left:359.70px;top:896.45px;font-size:14px;font-weight:400;color:#09090b;-webkit-text-stroke:0.252px #09090b;transform:scaleX(1.0750);transform-origin:left;">Table of contents</div>
<div class="a" style="left:700.2px;top:892.7px;width:113px;height:21.5px;border:1px solid #e4e4e7;border-radius:999px;"></div>
<div class="t" style="left:707.44px;top:897.84px;font-size:12px;font-weight:400;color:#71717a;-webkit-text-stroke:0.216px #71717a;transform:scaleX(1.0750);transform-origin:left;">Table of contents</div>
<div class="a" style="left:857.4px;top:892.7px;width:60px;height:21.5px;border:1px solid #e4e4e7;border-radius:999px;"></div>
<div class="a" style="left:864px;top:897.7px;width:12px;height:12px;border-radius:50%;background:#22c55e"></div>
<div class="t" style="left:879.97px;top:897.84px;font-size:12px;font-weight:400;color:#71717a;-webkit-text-stroke:0.216px #71717a;transform:scaleX(1.0750);transform-origin:left;">Done</div>
<div class="t" style="left:1006.80px;top:896.45px;font-size:14px;font-weight:400;color:#09090b;transform:scaleX(1.0000);transform-origin:left;">29</div>
<div class="t" style="left:1093.80px;top:896.45px;font-size:14px;font-weight:400;color:#09090b;transform:scaleX(1.0000);transform-origin:left;">24</div>
<div class="t" style="left:1146.32px;top:896.45px;font-size:14px;font-weight:400;color:#09090b;transform:scaleX(1.0539);transform-origin:left;">Eddie Lake</div>
<svg class="ic" style="left:1339px;top:895.7px;" width="16" height="16" viewBox="0 0 24 24" fill="none" stroke="#66666d" stroke-width="2" stroke-linecap="round" stroke-linejoin="round"><circle cx="12" cy="12" r="1"/><circle cx="12" cy="5" r="1"/><circle cx="12" cy="19" r="1"/></svg>
</body></html>
